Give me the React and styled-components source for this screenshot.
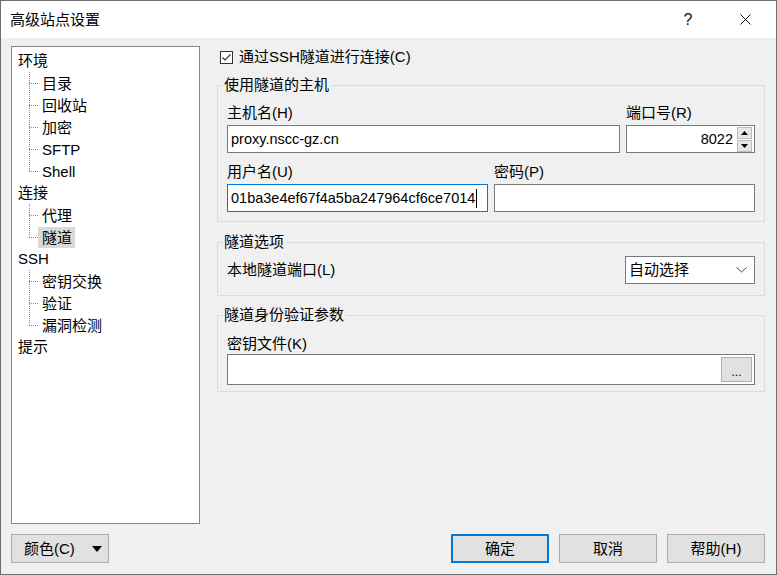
import React from 'react'
import styled, { createGlobalStyle } from 'styled-components'

const GlobalStyle = createGlobalStyle`
    * { box-sizing: border-box; }
    html, body { margin: 0; padding: 0; background: #ffffff; }
    body {
        font-family: "Liberation Sans", "Noto Sans CJK SC", sans-serif;
        font-size: 15px;
        color: #000;
    }
`

const TREE = [
    { name: '环境', children: ['目录', '回收站', '加密', 'SFTP', 'Shell'] },
    { name: '连接', children: ['代理', '隧道'] },
    { name: 'SSH', children: ['密钥交换', '验证', '漏洞检测'] },
    { name: '提示', children: [] },
]

const SELECTED = '隧道'

function CheckMark() {
    return (
        <svg width="11" height="11" viewBox="0 0 11 11">
            <polyline points="1.5,5.5 4,8 9.5,2.5" fill="none" stroke="#333" strokeWidth="1.2" />
        </svg>
    )
}

function Chevron() {
    return (
        <svg width="11" height="6" viewBox="0 0 11 6">
            <polyline points="0.5,0.5 5.5,5 10.5,0.5" fill="none" stroke="#444" strokeWidth="1" />
        </svg>
    )
}

function Arrow({ up }) {
    return (
        <svg width="7" height="4" viewBox="0 0 7 4">
            <polygon points={up ? '0,4 7,4 3.5,0' : '0,0 7,0 3.5,4'} fill="#000" />
        </svg>
    )
}

export default function App() {
    return (
        <>
            <GlobalStyle />
            <Window>
                <TitleBar>
                    <Title>高级站点设置</Title>
                    <CaptionButton width="40px">?</CaptionButton>
                    <CaptionButton width="40px" style={{ marginLeft: '17px' }}>
                        <svg width="11" height="11" viewBox="0 0 11 11">
                            <line x1="0.5" y1="0.5" x2="10.5" y2="10.5" stroke="#111" strokeWidth="1" />
                            <line x1="10.5" y1="0.5" x2="0.5" y2="10.5" stroke="#111" strokeWidth="1" />
                        </svg>
                    </CaptionButton>
                </TitleBar>

                <Body>
                    <Main>
                        <Tree>
                            {TREE.map(node => (
                                <div key={node.name}>
                                    <TreeRow>{node.name}</TreeRow>
                                    {node.children.map((child, i) => (
                                        <TreeRow key={child}>
                                            <Guide last={i === node.children.length - 1} />
                                            <TreeText selected={child === SELECTED}>{child}</TreeText>
                                        </TreeRow>
                                    ))}
                                </div>
                            ))}
                        </Tree>

                        <Content>
                            <CheckRow>
                                <CheckBox><CheckMark /></CheckBox>
                                <span>通过SSH隧道进行连接(C)</span>
                            </CheckRow>

                            <Group top="7px">
                                <Legend>使用隧道的主机</Legend>
                                <FieldGrid columns="393px 129px" top="8px">
                                    <Field>
                                        <Label>主机名(H)</Label>
                                        <Input>proxy.nscc-gz.cn</Input>
                                    </Field>
                                    <Field>
                                        <Label>端口号(R)</Label>
                                        <Input>
                                            <Value align="right">8022</Value>
                                            <Spinner>
                                                <SpinButton><Arrow up /></SpinButton>
                                                <SpinButton><Arrow /></SpinButton>
                                            </Spinner>
                                        </Input>
                                    </Field>
                                </FieldGrid>
                                <FieldGrid columns="1fr 1fr" top="9px">
                                    <Field>
                                        <Label>用户名(U)</Label>
                                        <Input focused>
                                            01ba3e4ef67f4a5ba247964cf6ce7014<Caret />
                                        </Input>
                                    </Field>
                                    <Field>
                                        <Label>密码(P)</Label>
                                        <Input />
                                    </Field>
                                </FieldGrid>
                            </Group>

                            <Group top="10px" bottom="11px">
                                <Legend>隧道选项</Legend>
                                <OptionRow>
                                    <span>本地隧道端口(L)</span>
                                    <Select>
                                        <span>自动选择</span>
                                        <Chevron />
                                    </Select>
                                </OptionRow>
                            </Group>

                            <Group top="9px" bottom="6px">
                                <Legend>隧道身份验证参数</Legend>
                                <Field style={{ marginTop: '9px' }}>
                                    <Label>密钥文件(K)</Label>
                                    <Input height="31px" gapTop="0">
                                        <Value />
                                        <BrowseButton>...</BrowseButton>
                                    </Input>
                                </Field>
                            </Group>
                        </Content>
                    </Main>

                    <Footer>
                        <Button>
                            <span>颜色(C)</span>
                            <svg width="10" height="6" viewBox="0 0 10 6" style={{ marginLeft: 'auto' }}>
                                <polygon points="0,0 10,0 5,6" fill="#000" />
                            </svg>
                        </Button>
                        <ButtonGroup>
                            <Button center primary>确定</Button>
                            <Button center>取消</Button>
                            <Button center>帮助(H)</Button>
                        </ButtonGroup>
                    </Footer>
                </Body>
            </Window>
        </>
    )
}

const Window = styled.div`
    width: 777px;
    height: 575px;
    border: 1px solid #6e6e6e;
    background: #f0f0f0;
    display: flex;
    flex-direction: column;
    overflow: hidden;
`

const TitleBar = styled.div`
    height: 37px;
    flex: none;
    background: #ffffff;
    display: flex;
    align-items: center;
    padding: 0 11px 0 9px;
`

const Title = styled.div`
    flex: 1;
    line-height: 20px;
    color: #000;
`

const CaptionButton = styled.div`
    width: ${props => props.width};
    height: 37px;
    display: flex;
    align-items: center;
    justify-content: center;
    font-size: 16px;
    color: #111;
`

const Body = styled.div`
    flex: 1;
    display: flex;
    flex-direction: column;
    padding: 8px 11px 11px 10px;
    min-height: 0;
`

const Main = styled.div`
    flex: 1;
    display: flex;
    gap: 17px;
    min-height: 0;
`

const Tree = styled.div`
    width: 189px;
    flex: none;
    background: #ffffff;
    border: 1px solid #828790;
    padding: 3px 0 0 6px;
`

const TreeRow = styled.div`
    height: 22px;
    line-height: 22px;
    display: flex;
    align-items: center;
    white-space: nowrap;
`

const Guide = styled.span`
    width: 20px;
    height: 22px;
    flex: none;
    background-image:
        repeating-linear-gradient(to bottom, #8a8a8a 0 1px, transparent 1px 2px),
        repeating-linear-gradient(to right, #8a8a8a 0 1px, transparent 1px 2px);
    background-repeat: no-repeat;
    background-position: 11px 0, 11px 11px;
    background-size: 1px ${props => (props.last ? '11px' : '22px')}, 9px 1px;
`

const TreeText = styled.span`
    padding: 0 3px 0 4px;
    height: 21px;
    line-height: 21px;
    background: ${props => (props.selected ? '#d9d9d9' : 'transparent')};
`

const Content = styled.div`
    width: 548px;
    flex: none;
    display: flex;
    flex-direction: column;
`

const CheckRow = styled.div`
    height: 22px;
    display: flex;
    align-items: center;
    gap: 6px;
    padding-left: 3px;
    line-height: 20px;
`

const CheckBox = styled.span`
    width: 13px;
    height: 13px;
    border: 1px solid #333;
    background: #fff;
    display: flex;
    align-items: center;
    justify-content: center;
`

const Group = styled.fieldset`
    margin: ${props => props.top || '0'} 0 0 0;
    min-width: 0;
    border: 1px solid #dcdcdc;
    padding: 0 9px ${props => props.bottom || '9px'} 9px;
`

const Legend = styled.legend`
    margin-left: -4px;
    padding: 0 2px 0 1px;
    line-height: 20px;
`

const FieldGrid = styled.div`
    display: grid;
    grid-template-columns: ${props => props.columns};
    gap: 6px;
    margin-top: ${props => props.top};
`

const Field = styled.div`
    display: flex;
    flex-direction: column;
    min-width: 0;
`

const Label = styled.div`
    height: 20px;
    line-height: 20px;
    white-space: nowrap;
`

const Input = styled.div`
    margin-top: ${props => props.gapTop || '2px'};
    height: ${props => props.height || '28px'};
    background: #ffffff;
    border: 1px solid ${props => (props.focused ? '#0078d7' : '#7a7a7a')};
    display: flex;
    align-items: center;
    padding-left: 3px;
    font-size: 14.5px;
    white-space: nowrap;
    overflow: hidden;
`

const Value = styled.span`
    flex: 1;
    text-align: ${props => props.align || 'left'};
    padding-right: 4px;
`

const Caret = styled.span`
    display: inline-block;
    width: 1px;
    height: 19px;
    background: #000;
    margin-left: 1px;
`

const Spinner = styled.div`
    display: flex;
    flex-direction: column;
    gap: 1px;
    margin-right: 2px;
    align-self: center;
`

const SpinButton = styled.div`
    width: 15px;
    height: 12px;
    background: #e6e6e6;
    border: 1px solid #bcbcbc;
    display: flex;
    align-items: center;
    justify-content: center;
`

const OptionRow = styled.div`
    display: flex;
    align-items: center;
    justify-content: space-between;
    padding: 4px 0 0 0;
    line-height: 20px;
`

const Select = styled.div`
    width: 130px;
    height: 28px;
    background: #ffffff;
    border: 1px solid #7a7a7a;
    display: flex;
    align-items: center;
    justify-content: space-between;
    padding: 0 7px 0 3px;
`

const BrowseButton = styled.div`
    width: 31px;
    height: 25px;
    margin-right: 2px;
    background: #e1e1e1;
    border: 1px solid #adadad;
    display: flex;
    align-items: flex-end;
    justify-content: center;
    font-size: 12px;
    line-height: 18px;
`

const Footer = styled.div`
    height: 29px;
    margin-top: 10px;
    flex: none;
    display: flex;
    justify-content: space-between;
`

const ButtonGroup = styled.div`
    display: flex;
    gap: 10px;
`

const Button = styled.div`
    width: 98px;
    height: 29px;
    background: #e1e1e1;
    border: ${props => (props.primary ? '2px solid #0078d7' : '1px solid #adadad')};
    display: flex;
    align-items: center;
    justify-content: ${props => (props.center ? 'center' : 'flex-start')};
    padding: ${props => (props.center ? '0' : '0 6px 0 12px')};
    line-height: 20px;
    white-space: nowrap;
`
